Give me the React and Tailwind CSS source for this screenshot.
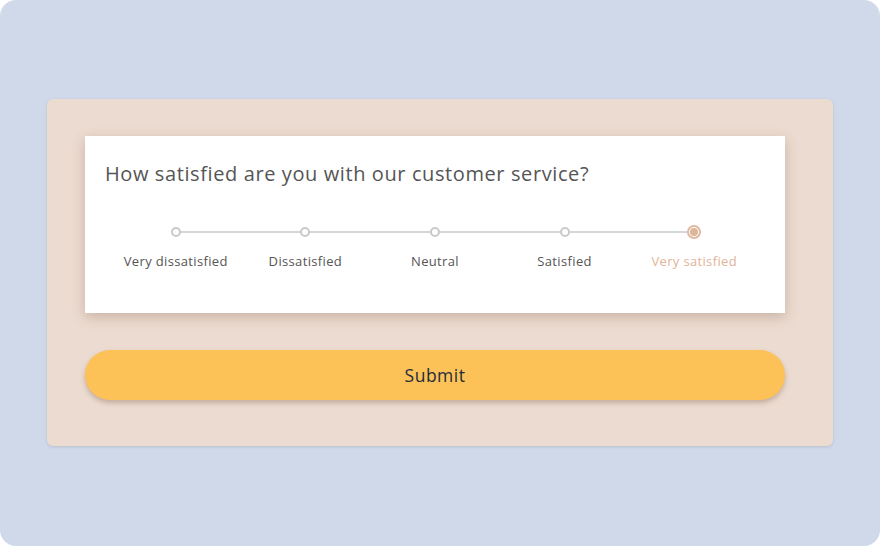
import React from "react";

const options = ["Very dissatisfied", "Dissatisfied", "Neutral", "Satisfied", "Very satisfied"];

export default function App() {
  const selected = 4;
  return (
    <div className="w-[880px] h-[546px] bg-white" style={{ fontFamily: '"Open Sans", sans-serif' }}>
      <div className="w-full h-full rounded-2xl bg-[#d0d9ea] pt-[99px] px-[47px]">
        <div className="h-[347px] rounded-md bg-[#ecdbd0] shadow-[0_1px_3px_rgba(0,0,0,0.12)] pl-[38px] pr-[48px] pt-[37px]">
          <div className="bg-white h-[177px] shadow-[0_4px_12px_rgba(120,90,70,0.3)] pt-[24px]">
            <h1 className="pl-[20px] text-[20px] tracking-[0.6px] leading-[28px] text-[#555]">
              How satisfied are you with our customer service?
            </h1>
            <div className="relative mt-[36px] mx-[26px] flex">
              <div className="absolute left-[64px] right-[64px] top-[7px] h-[2px] bg-[#d6d6d6]" />
              {options.map((o, i) => (
                <div key={o} className="relative flex-1 flex flex-col items-center">
                  <div className="h-4 flex items-center justify-center">
                    {i === selected ? (
                      <div className="w-[14px] h-[14px] rounded-full border-2 border-[#e2b89e] bg-white flex items-center justify-center">
                        <div className="w-[8px] h-[8px] rounded-full bg-[#ddb59b]" />
                      </div>
                    ) : (
                      <div className="w-[10px] h-[10px] rounded-full border-2 border-[#c9c9c9] bg-white" />
                    )}
                  </div>
                  <div
                    className={`mt-[12px] text-[13px] tracking-[0.35px] leading-[18px] ${i === selected ? "text-[#e2b49a]" : "text-[#555]"}`}
                  >
                    {o}
                  </div>
                </div>
              ))}
            </div>
          </div>
          <button className="mt-[37px] w-full h-[50px] rounded-full bg-[#fcc257] text-[17.5px] tracking-[0.5px] text-[#1f2d3d] shadow-[0_3px_5px_rgba(120,90,70,0.35)]">
            Submit
          </button>
        </div>
      </div>
    </div>
  );
}
